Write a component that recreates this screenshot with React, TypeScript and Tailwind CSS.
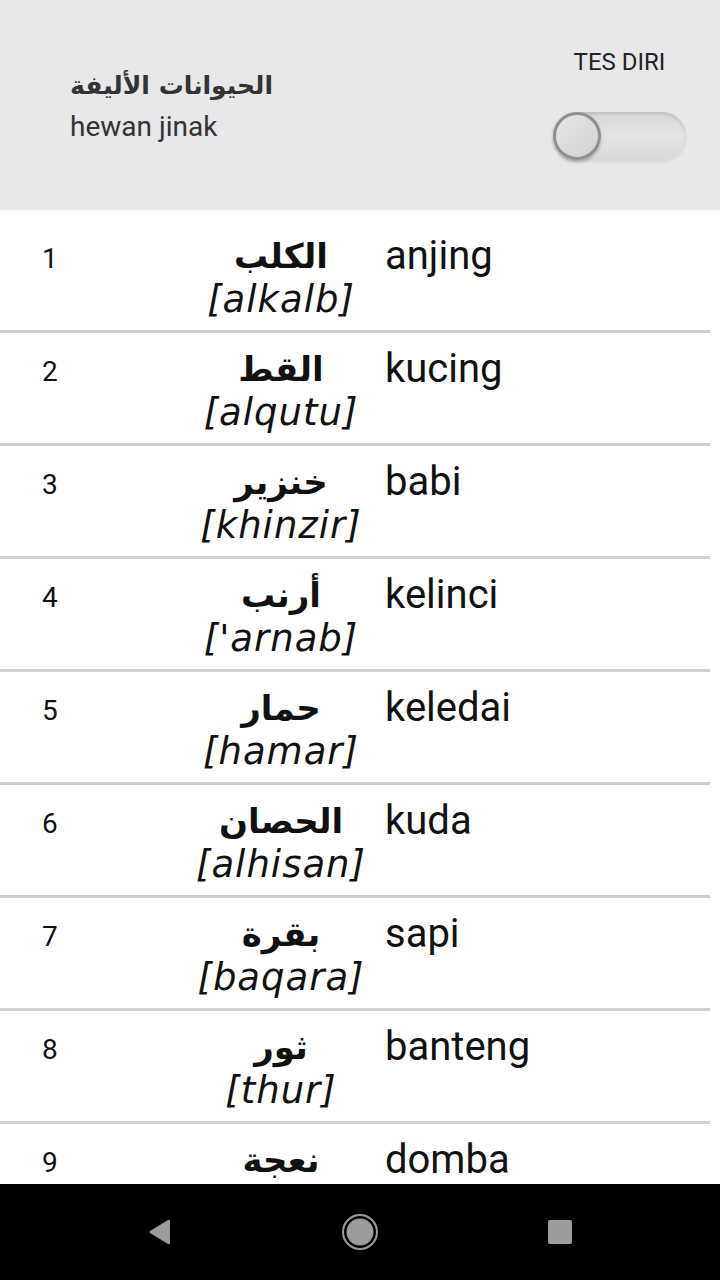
import React from "react"

const words = [
  { ar: "الكلب", tr: "[alkalb]", id: "anjing" },
  { ar: "القط", tr: "[alqutu]", id: "kucing" },
  { ar: "خنزير", tr: "[khinzir]", id: "babi" },
  { ar: "أرنب", tr: "['arnab]", id: "kelinci" },
  { ar: "حمار", tr: "[hamar]", id: "keledai" },
  { ar: "الحصان", tr: "[alhisan]", id: "kuda" },
  { ar: "بقرة", tr: "[baqara]", id: "sapi" },
  { ar: "ثور", tr: "[thur]", id: "banteng" },
  { ar: "نعجة", tr: "[naeja]", id: "domba" },
]

function Toggle() {
  return (
    <div className="relative h-[48px] w-[133px] rounded-full bg-gradient-to-b from-[#d6d6d6] via-[#e4e4e4] to-[#d9d9d9] shadow-[inset_0_2px_3px_rgba(0,0,0,0.12),0_2px_3px_rgba(0,0,0,0.08)]">
      <div className="absolute left-0 top-0 h-[48px] w-[48px] rounded-full border-[3px] border-[#8f8f8f] bg-gradient-to-br from-[#e6e6e6] to-[#d2d2d2] shadow-[0_2px_3px_rgba(0,0,0,0.25)]" />
    </div>
  )
}

export default function App() {
  return (
    <div className="flex h-[1280px] w-[720px] flex-col overflow-hidden bg-white" style={{ fontFamily: "Roboto, 'DejaVu Sans', sans-serif" }}>
      <header className="flex h-[210px] shrink-0 items-start justify-between bg-[#e8e7ea] pl-[70px] pr-[34px]">
        <div className="mt-[66px] flex flex-col">
          <span dir="rtl" className="text-left font-['DejaVu_Sans',sans-serif] text-[25px] font-bold leading-[40px] text-[#333]">
            الحيوانات الأليفة
          </span>
          <span className="mt-[3px] text-[28px] leading-[36px] text-[#333]">hewan jinak</span>
        </div>
        <div className="mt-[46px] flex flex-col items-center">
          <span className="text-[24px] leading-[32px] text-[#222]">TES DIRI</span>
          <div className="mt-[34px]">
            <Toggle />
          </div>
        </div>
      </header>

      <main className="flex-1 overflow-hidden pt-[10px]">
        {words.map((w, i) => (
          <div key={i} className="mr-[10px] flex h-[113px] border-b-[3px] border-[#cfcfcf] pt-[14px]">
            <span className="mt-[3px] w-[182px] shrink-0 pl-[42px] text-[28px] leading-[44px] text-[#111]">{i + 1}</span>
            <div className="flex w-[198px] shrink-0 flex-col items-center">
              <span dir="rtl" className="font-['DejaVu_Sans',sans-serif] text-[34px] font-bold leading-[44px] text-[#111]">
                {w.ar}
              </span>
              <span className="font-['DejaVu_Sans',sans-serif] text-[37px] italic leading-[44px] tracking-[1px] text-[#111]">
                {w.tr}
              </span>
            </div>
            <span className="ml-[5px] text-[40px] leading-[44px] text-[#111]">{w.id}</span>
          </div>
        ))}
      </main>

      <nav className="flex h-[96px] shrink-0 items-center bg-black">
        <div className="flex w-full items-center justify-between px-[148px]">
          <svg width="24" height="26" viewBox="0 0 24 26">
            <path d="M22 2 L22 24 Q22 26 20 25 L2 14 Q0.5 13 2 12 L20 1 Q22 0 22 2 Z" fill="#9b9b9b" />
          </svg>
          <svg width="38" height="38" viewBox="0 0 38 38">
            <circle cx="19" cy="19" r="17" fill="none" stroke="#9b9b9b" strokeWidth="2" />
            <circle cx="19" cy="19" r="13.5" fill="#9b9b9b" />
          </svg>
          <svg width="24" height="24" viewBox="0 0 24 24">
            <rect x="0" y="0" width="24" height="24" rx="2" fill="#9b9b9b" />
          </svg>
        </div>
      </nav>
    </div>
  )
}
